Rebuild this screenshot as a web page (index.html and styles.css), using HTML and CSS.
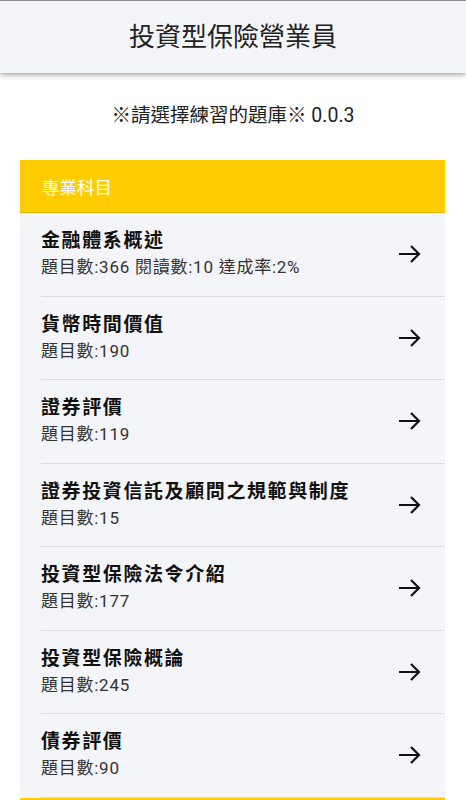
FILE: index.html
```html
<!DOCTYPE html>
<html lang="zh-Hant">
<head>
<meta charset="utf-8">
<link rel="stylesheet" href="styles.css">
</head>
<body>
<header class="appbar"><h1 class="appbar-title">投資型保險營業員</h1></header>
<p class="hint">※請選擇練習的題庫※ 0.0.3</p>
<section class="card">
  <div class="card-header">專業科目</div>
  <ul class="list">
    <li class="row"><div class="row-inner"><div class="row-text"><div class="row-title">金融體系概述</div><div class="row-sub">題目數:366 閱讀數:10 達成率:2%</div></div><svg class="arrow" viewBox="0 0 24 24"><path d="M2 12H22M14 4L22 12L14 20"/></svg></div></li>
    <li class="row"><div class="row-inner"><div class="row-text"><div class="row-title">貨幣時間價值</div><div class="row-sub">題目數:190</div></div><svg class="arrow" viewBox="0 0 24 24"><path d="M2 12H22M14 4L22 12L14 20"/></svg></div></li>
    <li class="row"><div class="row-inner"><div class="row-text"><div class="row-title">證券評價</div><div class="row-sub">題目數:119</div></div><svg class="arrow" viewBox="0 0 24 24"><path d="M2 12H22M14 4L22 12L14 20"/></svg></div></li>
    <li class="row"><div class="row-inner"><div class="row-text"><div class="row-title">證券投資信託及顧問之規範與制度</div><div class="row-sub">題目數:15</div></div><svg class="arrow" viewBox="0 0 24 24"><path d="M2 12H22M14 4L22 12L14 20"/></svg></div></li>
    <li class="row"><div class="row-inner"><div class="row-text"><div class="row-title">投資型保險法令介紹</div><div class="row-sub">題目數:177</div></div><svg class="arrow" viewBox="0 0 24 24"><path d="M2 12H22M14 4L22 12L14 20"/></svg></div></li>
    <li class="row"><div class="row-inner"><div class="row-text"><div class="row-title">投資型保險概論</div><div class="row-sub">題目數:245</div></div><svg class="arrow" viewBox="0 0 24 24"><path d="M2 12H22M14 4L22 12L14 20"/></svg></div></li>
    <li class="row"><div class="row-inner"><div class="row-text"><div class="row-title">債券評價</div><div class="row-sub">題目數:90</div></div><svg class="arrow" viewBox="0 0 24 24"><path d="M2 12H22M14 4L22 12L14 20"/></svg></div></li>
  </ul>
</section>
<section class="card">
  <div class="card-header"></div>
</section>
</body>
</html>
```
FILE: styles.css
```css
* { box-sizing: border-box; }
html, body { margin: 0; padding: 0; }
body {
  background: #ffffff;
  font-family: Roboto, "Noto Sans CJK TC", "Noto Sans CJK SC", sans-serif;
  color: #111;
}
.appbar {
  height: 73px;
  border-top: 1px solid #8a8a8a;
  background: #f4f5f9;
  box-shadow: 0 2px 5px rgba(0, 0, 0, 0.35);
  display: flex;
  align-items: center;
  justify-content: center;
  position: relative;
  z-index: 1;
}
.appbar-title {
  margin: 0;
  font-size: 26px;
  font-weight: 400;
  color: #222;
  line-height: 32px;
}
.hint {
  margin: 0;
  padding: 29px 0 30px;
  text-align: center;
  font-size: 19.5px;
  line-height: 28px;
  color: #222;
}
.card {
  margin: 0 21px 0 20px;
}
.card-header {
  height: 53px;
  background: #ffcc00;
  border-bottom: 1px solid #e2b400;
  color: #fff;
  font-size: 17.5px;
  padding-left: 22px;
  display: flex;
  align-items: center;
}
.list {
  list-style: none;
  margin: 0;
  padding: 0;
}
.row {
  background: #f4f5f9;
  padding-left: 21px;
}
.row-inner {
  height: 83.5px;
  border-bottom: 1px solid #dcdcdf;
  display: flex;
  align-items: center;
  justify-content: space-between;
}
.row-text {
  display: flex;
  flex-direction: column;
}
.row-title {
  font-size: 19px;
  letter-spacing: 1.6px;
  font-weight: 700;
  line-height: 24px;
  color: #111;
}
.row-sub {
  margin-top: 2px;
  font-size: 17px;
  letter-spacing: 0.75px;
  line-height: 24px;
  color: #333;
}
.arrow {
  width: 24px;
  height: 24px;
  margin-right: 24px;
  fill: none;
  stroke: #111;
  stroke-width: 2.2;
  stroke-linejoin: miter;
}
```
